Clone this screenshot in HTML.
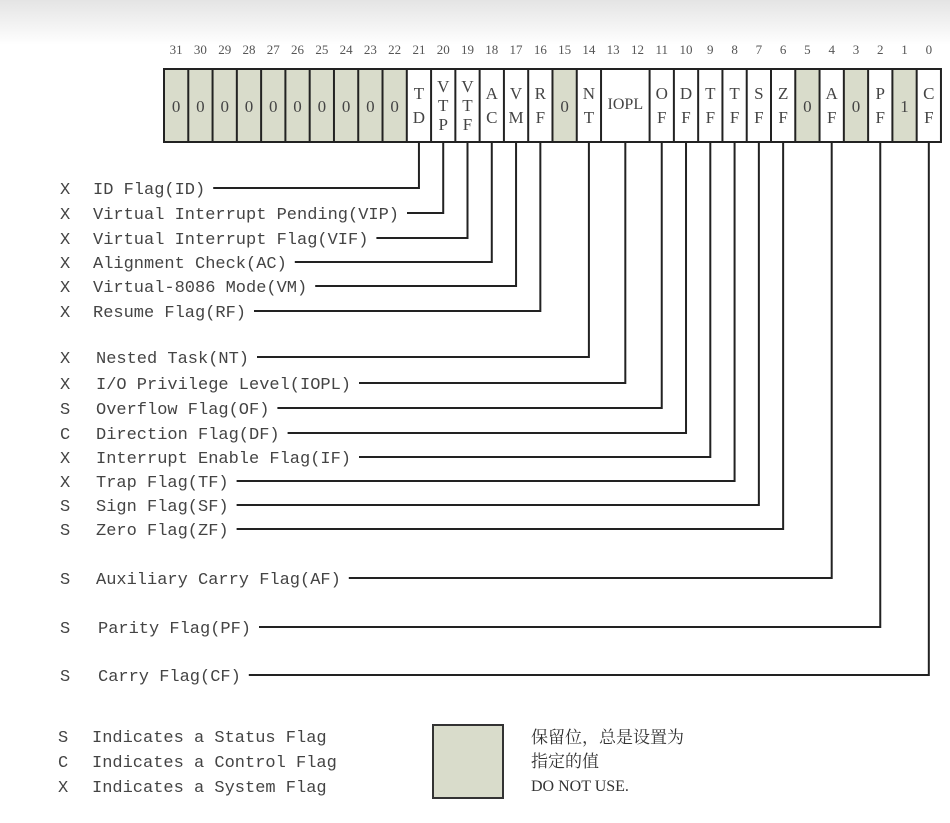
<!DOCTYPE html>
<html><head><meta charset="utf-8"><style>
html,body{margin:0;padding:0;width:950px;height:823px;overflow:hidden;background:linear-gradient(#e4e4e4 0px,#fff 45px,#fff);}
svg{display:block}
.m{font-family:"Liberation Mono",monospace;font-size:17px;fill:#444}
.n{font-family:"Liberation Serif",serif;font-size:13px;fill:#555;text-anchor:middle}
.c{font-family:"Liberation Serif",serif;font-size:17px;fill:#444;text-anchor:middle}
.z{font-family:"Liberation Serif","Noto Serif CJK SC",serif;font-size:17px;fill:#333}
</style></head><body>
<svg width="950" height="823" xmlns="http://www.w3.org/2000/svg">
<g id="g"></g>
</svg>
<script>
var W=24.28,X0=164,T=69,B=142;
var s='';
function cx(b){return X0+(31-b)*W+W/2;}
var gray=[31,30,29,28,27,26,25,24,23,22,15,5,3,1];
for(var b=31;b>=0;b--){
 var x=X0+(31-b)*W;
 if(gray.indexOf(b)>=0) s+='<rect x="'+x+'" y="'+T+'" width="'+W+'" height="'+(B-T)+'" fill="#d9dccb"/>';
 s+='<text class="n" x="'+cx(b)+'" y="54">'+b+'</text>';
}
var cells={21:['T','D'],20:['V','T','P'],19:['V','T','F'],18:['A','C'],17:['V','M'],16:['R','F'],14:['N','T'],11:['O','F'],10:['D','F'],9:['T','F'],8:['T','F'],7:['S','F'],6:['Z','F'],4:['A','F'],2:['P','F'],0:['C','F']};
for(var b=31;b>=0;b--){
 if(gray.indexOf(b)>=0){s+='<text class="c" x="'+cx(b)+'" y="112">'+(b==1?'1':'0')+'</text>';}
 else if(cells[b]){var L=cells[b];var y0=L.length==3?92:99;var d=L.length==3?19:24;for(var i=0;i<L.length;i++)s+='<text class="c" x="'+cx(b)+'" y="'+(y0+i*d)+'">'+L[i]+'</text>';}
}
s+='<text class="c" x="'+(X0+18*W+W)+'" y="109" style="font-size:16px">IOPL</text>';
s+='<rect x="'+X0+'" y="'+T+'" width="'+(32*W)+'" height="'+(B-T)+'" fill="none" stroke="#222" stroke-width="2"/>';
for(var b=30;b>=0;b--){ if(b==12)continue; var x=X0+(31-b)*W; s+='<line x1="'+x+'" y1="'+T+'" x2="'+x+'" y2="'+B+'" stroke="#222" stroke-width="2"/>';}
var rows=[['X','ID Flag(ID)',21,188,93],['X','Virtual Interrupt Pending(VIP)',20,213,93],['X','Virtual Interrupt Flag(VIF)',19,238,93],['X','Alignment Check(AC)',18,262,93],['X','Virtual-8086 Mode(VM)',17,286,93],['X','Resume Flag(RF)',16,311,93],
['X','Nested Task(NT)',14,357,96],['X','I/O Privilege Level(IOPL)',12.5,383,96],['S','Overflow Flag(OF)',11,408,96],['C','Direction Flag(DF)',10,433,96],['X','Interrupt Enable Flag(IF)',9,457,96],['X','Trap Flag(TF)',8,481,96],['S','Sign Flag(SF)',7,505,96],['S','Zero Flag(ZF)',6,529,96],
['S','Auxiliary Carry Flag(AF)',4,578,96],['S','Parity Flag(PF)',2,627,98],['S','Carry Flag(CF)',0,675,98]];
rows.forEach(function(r){
 var vx=r[2]==12.5?X0+18*W+W:cx(r[2]);
 var w=r[1].length*10.2;
 s+='<text class="m" x="60" y="'+(r[3]+6)+'">'+r[0]+'</text>';
 s+='<text class="m" x="'+r[4]+'" y="'+(r[3]+6)+'" textLength="'+w+'">'+r[1]+'</text>';
 s+='<polyline points="'+(r[4]+w+8)+','+r[3]+' '+vx+','+r[3]+' '+vx+','+B+'" fill="none" stroke="#222" stroke-width="2"/>';
});
var leg=[['S','Indicates a Status Flag',736],['C','Indicates a Control Flag',761],['X','Indicates a System Flag',786]];
leg.forEach(function(r){s+='<text class="m" x="58" y="'+(r[2]+6)+'">'+r[0]+'</text><text class="m" x="92" y="'+(r[2]+6)+'" textLength="'+(r[1].length*10.2)+'">'+r[1]+'</text>';});
s+='<rect x="433" y="725" width="70" height="73" fill="#d9dccb" stroke="#333" stroke-width="2"/>';
s+='<text class="z" x="531" y="743">保留位，总是设置为</text><text class="z" x="531" y="767">指定的值</text><text class="z" x="531" y="791" style="font-size:16px">DO NOT USE.</text>';
document.getElementById('g').innerHTML=s;
</script>
</body></html>
